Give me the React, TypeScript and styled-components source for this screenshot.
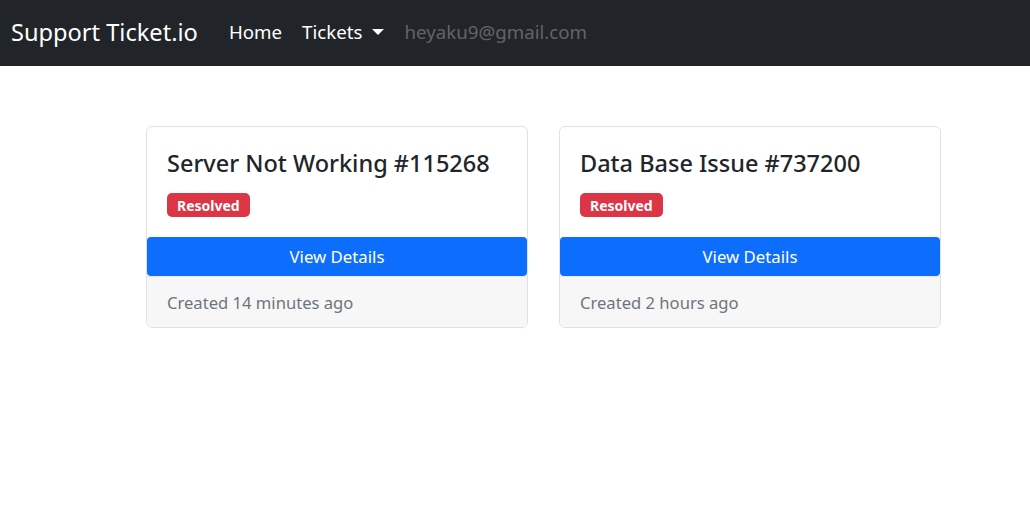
import React from "react";
import styled, { createGlobalStyle } from "styled-components";

const GlobalStyle = createGlobalStyle`
  * { box-sizing: border-box; }
  body {
    margin: 0;
    font-family: "Noto Sans", "Open Sans", sans-serif;
    color: #212529;
    background: #fff;
  }
`;

const Navbar = styled.nav`
  height: 66px;
  background: #212529;
  display: flex;
  align-items: center;
  padding: 0 11px 3px;
`;

const Brand = styled.a`
  color: #fff;
  font-size: 23.6px;
  margin-right: 31px;
  text-decoration: none;
  cursor: pointer;
`;

const NavLink = styled.a<{ $muted?: boolean }>`
  color: ${(p) => (p.$muted ? "rgba(255,255,255,0.3)" : "#fff")};
  font-size: 18.7px;
  margin-right: 20px;
  text-decoration: none;
  display: flex;
  align-items: center;
  cursor: pointer;
`;

const Caret = styled.span`
  display: inline-block;
  margin-left: 10px;
  border-top: 6px solid #fff;
  border-left: 6px solid transparent;
  border-right: 6px solid transparent;
`;

const Main = styled.main`
  display: flex;
  gap: 31px;
  padding: 60px 0 0 146px;
`;

const Card = styled.div`
  width: 382px;
  border: 1px solid #dee2e6;
  border-radius: 6px;
  overflow: hidden;
  display: flex;
  flex-direction: column;
`;

const CardBody = styled.div`
  padding: 22px 20px 20px;
`;

const Title = styled.h4`
  margin: 0 0 16px;
  font-size: 23.5px;
  font-weight: 500;
  line-height: 1.2;
`;

const Badge = styled.span<{ $color: string }>`
  display: inline-block;
  background: ${(p) => p.$color};
  color: #fff;
  font-size: 14px;
  font-weight: 700;
  padding: 4px 10px 3px;
  border-radius: 5px;
  line-height: 17px;
`;

const Button = styled.button`
  width: 100%;
  height: 39px;
  border: none;
  border-radius: 4px;
  background: #0d6efd;
  color: #fff;
  font-family: inherit;
  font-size: 16.8px;
  cursor: pointer;
`;

const Footer = styled.div`
  background: #f7f7f7;
  border-top: 1px solid #e6e6e6;
  color: #6c757d;
  font-size: 16.6px;
  padding: 14px 20px 13px;
`;

const tickets = [
  { title: "Server Not Working", id: 115268, status: "Resolved", created: "Created 14 minutes ago" },
  { title: "Data Base Issue", id: 737200, status: "Resolved", created: "Created 2 hours ago" },
];

export default function App() {
  return (
    <>
      <GlobalStyle />
      <Navbar>
        <Brand>Support Ticket.io</Brand>
        <NavLink>Home</NavLink>
        <NavLink>
          Tickets <Caret />
        </NavLink>
        <NavLink $muted>heyaku9@gmail.com</NavLink>
      </Navbar>
      <Main>
        {tickets.map((t) => (
          <Card key={t.id}>
            <CardBody>
              <Title>
                {t.title} #{t.id}
              </Title>
              <Badge $color="#dc3545">{t.status}</Badge>
            </CardBody>
            <Button>View Details</Button>
            <Footer>{t.created}</Footer>
          </Card>
        ))}
      </Main>
    </>
  );
}
